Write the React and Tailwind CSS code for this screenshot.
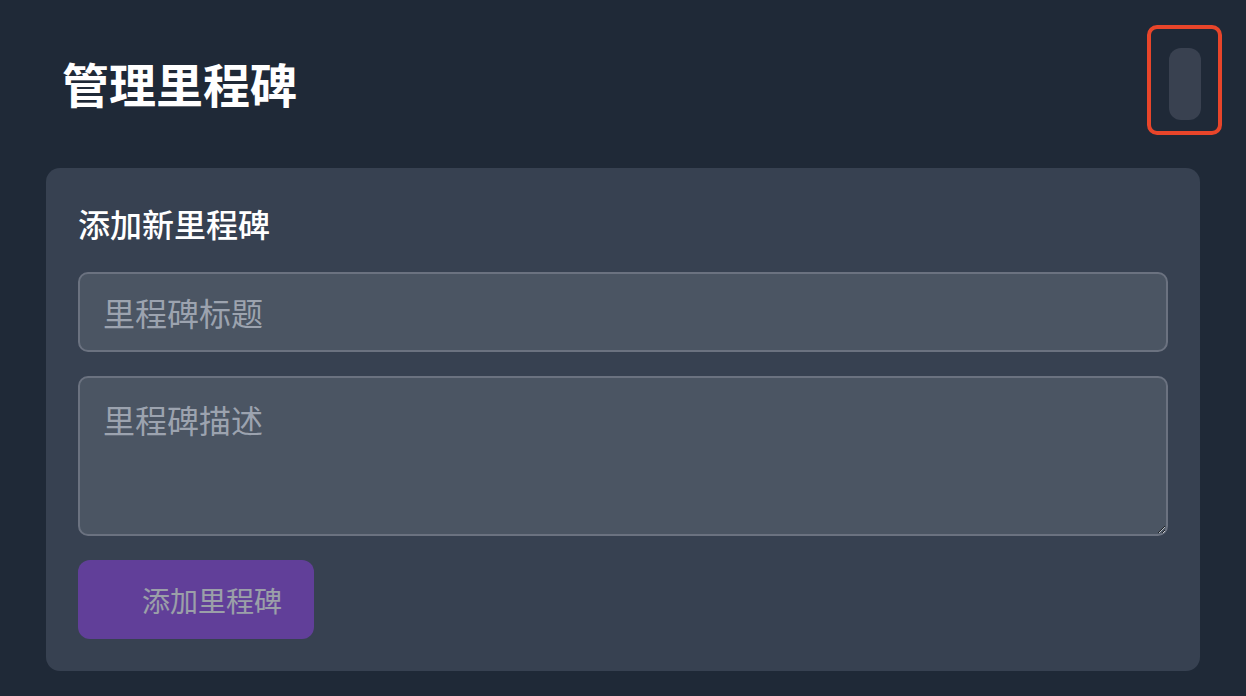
import { useState } from 'react';

const cjk = { fontFamily: '"Noto Sans CJK SC", "Noto Sans", sans-serif' };

const App = () => {
  const [title, setTitle] = useState('');
  const [desc, setDesc] = useState('');
  const disabled = !title.trim();

  return (
    <div className="w-[1246px] h-[696px] bg-[#1f2937] overflow-hidden" style={cjk}>
      {/* Header */}
      <div className="flex items-center justify-between pl-[62px] pr-[24px] pt-[25px]">
        <h2 className="text-[47px] leading-[60px] font-bold text-white mt-[6px]">管理里程碑</h2>
        <div className="w-[75px] h-[110px] border-[4px] border-[#e8452a] rounded-[10px] flex justify-center pt-[19px]">
          <div className="w-[32px] h-[72px] rounded-[12px] bg-[#394150]" />
        </div>
      </div>

      {/* Add form */}
      <div className="mx-[46px] mt-[33px] bg-[#374151] rounded-[14px] px-[32px] pt-[36px] pb-[32px]">
        <h3 className="text-[32px] leading-[38px] font-medium text-white">添加新里程碑</h3>
        <div className="mt-[30px] flex flex-col gap-[24px]">
          <input
            value={title}
            onChange={(e) => setTitle(e.target.value)}
            placeholder="里程碑标题"
            className="h-[80px] w-full bg-[#4b5563] border-2 border-[#6b7280] rounded-[10px] px-[23px] text-[32px] text-white placeholder:text-[#9ca3af] outline-none"
          />
          <textarea
            value={desc}
            onChange={(e) => setDesc(e.target.value)}
            placeholder="里程碑描述"
            className="h-[160px] w-full bg-[#4b5563] border-2 border-[#6b7280] rounded-[10px] px-[23px] pt-[20px] text-[32px] leading-[42px] text-white placeholder:text-[#9ca3af] outline-none"
          />
          <div>
            <button
              disabled={disabled}
              className="h-[79px] w-[236px] rounded-[12px] bg-[#8b3fe0] text-white text-[28px] pl-[64px] pr-[32px] text-left opacity-50"
            >
              添加里程碑
            </button>
          </div>
        </div>
      </div>
    </div>
  );
};

export default App;
